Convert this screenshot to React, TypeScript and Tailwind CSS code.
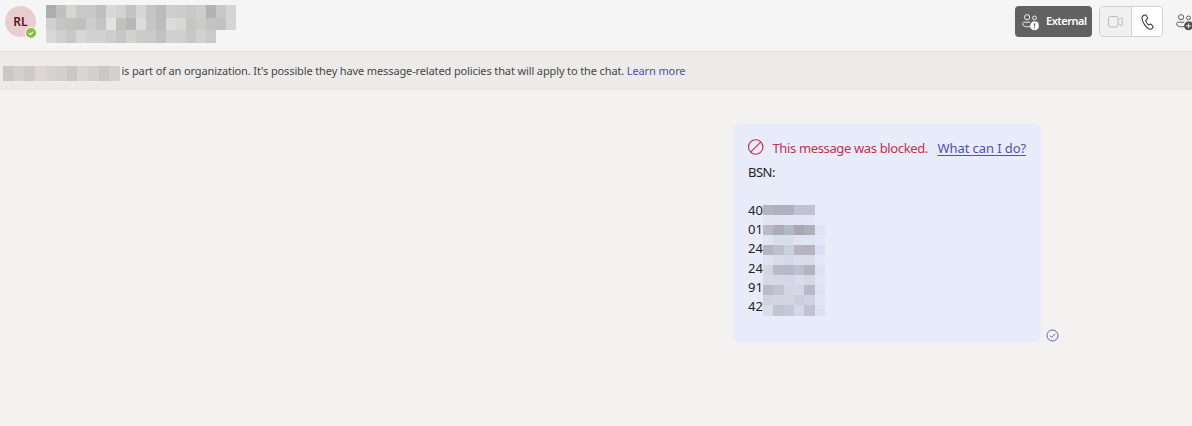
const headerMosaic: string[][] = [
  ['#adadac', '#c0c0bf', '#d6d6d4', '#c9c9c8', '#c8c8c9', '#bfbfbf', '#d8d8d6', '#d3d3d1', '#c3c3c2', '#d6d6d7', '#c4c5c4', '#bbbbbb', '#cecece', '#cbcccb', '#c9c9c6', '#cdcdcd', '#b2b3b3', '#c8c8c6', '#d5d5d6'],
  ['#d0d0d0', '#c5c5c5', '#c2c2be', '#c0c0bc', '#cecece', '#c4c4c4', '#e2e2e2', '#c1c1bf', '#b7b7b7', '#dcdcdc', '#c6c6c6', '#bcbcbc', '#dbdbdb', '#d7d7d7', '#c5c5c4', '#cacac9', '#c3c3c3', '#c2c2c2', '#d5d5d5'],
  ['#d8d8d8', '#cfcfcf', '#c9c9c9', '#d8d8d8', '#d2d2d2', '#d2d2d2', '#cecece', '#c6c6c6', '#d2d2cf', '#cbcbc7', '#cacaca', '#c1c1c1', '#d0d0d0', '#cfcfcf', '#c7c7c6', '#d1d1d1', '#cacac9'],
];

const nameMosaic: string[] = ['#cac7c5', '#d2d1cf', '#cfcac7', '#ddd7d4', '#d4d3d1', '#d2d0ce', '#c9c8c6', '#d8d5d3', '#d3cfcc', '#ccc7c4', '#d2d1d0'];

const numberMosaic: string[][] = [
  ['#b4b4be', '#adb1c0', '#adb1c0', '#c2c1d0', '#c1c1d4', '#e8ebfa'],
  ['#e2e4f3', '#dfe3f2', '#e2e5f3', '#e4e6f5', '#e4e6f5', '#e8ebfa'],
  ['#babbc8', '#acadb8', '#b3b9c7', '#a8a8b3', '#b0b0ba', '#dfe3f6'],
  ['#e1e4f3', '#d9deeb', '#d8dfec', '#dfe2f0', '#e0e3f2', '#e4e7f7'],
  ['#b5b6c3', '#bec0cb', '#cbd0df', '#b5b4c0', '#b4b3be', '#dadff3'],
  ['#dfe2ef', '#d9ddea', '#d4d9e8', '#d9dcea', '#d8dbe9', '#e3e7f7'],
  ['#d4d6e2', '#b8bac9', '#b5b9ca', '#c0c1cf', '#b4b4c1', '#dfe2f2'],
  ['#d6d8e4', '#d5d8e4', '#d3d7e7', '#d9dbe7', '#d5d7e4', '#e2e5f5'],
  ['#bbbbca', '#c3c4d0', '#d3d5e6', '#d5d7e5', '#b9bac8', '#dee3f4'],
  ['#d1d2df', '#d3d4e0', '#d3d5e2', '#cccedb', '#d1d2df', '#e0e4f5'],
  ['#d9dce9', '#c2c3d0', '#c4c8d8', '#d4d7e6', '#c2c3d0', '#dde2f3'],
];

function Cells({ rows, cell, className }: { rows: string[][]; cell: string; className?: string }) {
  return (
    <div className={className} aria-hidden="true">
      {rows.map((row, y) => (
        <div key={y} className="flex">
          {row.map((color, x) => (
            <span key={x} className={cell} style={{ backgroundColor: color }} />
          ))}
        </div>
      ))}
    </div>
  );
}

function PeopleIcon({ badge }: { badge: 'alert' | 'add' }) {
  const light = badge === 'alert';
  const ink = light ? '#f0f0f0' : '#5a5a5a';
  return (
    <svg className="h-[18px] w-[18px] shrink-0" viewBox="0 0 18 18" fill="none" stroke={ink} strokeWidth="1">
      <circle cx="5.100" cy="4.200" r="2.600" />
      <circle cx="12.500" cy="4.900" r="1.900" />
      <path d="M8.200 9.200H2.100C1.200 9.200.6 9.800.6 10.600c0 2.200 2 3.200 4.800 3.200 1 0 1.900-.1 2.600-.4" />
      <path d="M10.500 9.200h4.500c.9 0 1.500.6 1.500 1.200" />
      <circle cx="12.500" cy="12.900" r="4.400" fill={light ? '#ffffff' : '#4f4f4f'} stroke="none" />
      {light ? (
        <path d="M12.500 10.300v3.200M12.500 14.400v1.100" stroke="#5f5f5f" strokeWidth="1.200" />
      ) : (
        <path d="M12.500 10.500v4.800M10.100 12.900h4.800" stroke="#f5f5f5" strokeWidth="1" />
      )}
    </svg>
  );
}

function Header() {
  return (
    <header className="flex h-[52px] shrink-0 items-start border-b border-[#e1e1e0] bg-[#f5f5f5]">
      <div className="relative mt-[6px] ml-[5px] flex h-[31px] w-[31px] shrink-0 items-center justify-center rounded-full bg-[#e8cdd1] text-[12px] font-semibold text-[#5c1420]">
        <span>RL</span>
        <span className="absolute top-[21px] left-[20px] flex h-[12px] w-[12px] items-center justify-center rounded-full bg-[#f5f5f5]">
          <svg className="h-[10px] w-[10px]" viewBox="0 0 10 10" fill="none">
            <circle cx="5" cy="5" r="5" fill="#8cbd45" />
            <path d="M3 5.100l1.400 1.300L7 3.900" stroke="#fff" strokeWidth="1.100" />
          </svg>
        </span>
      </div>
      <Cells rows={headerMosaic} cell="h-[12.5px] w-[10px]" className="mt-[5px] ml-[10px]" />
      <div className="mt-[6px] ml-[779px] flex shrink-0 items-center">
        <button className="flex h-[31px] w-[77px] items-center rounded-[4px] bg-[#616161] pl-[7px] text-[11px] font-semibold text-white">
          <PeopleIcon badge="alert" />
          <span className="ml-[6px] tracking-[-0.5px]">External</span>
        </button>
        <div className="ml-[7px] flex h-[31px] w-[64px] overflow-hidden rounded-[4px] border border-[#d1d1d1]">
          <button className="flex w-[32px] items-center justify-center border-r border-[#d1d1d1] bg-[#f0f0f0]" aria-label="Video call">
            <svg className="h-[14px] w-[17px]" viewBox="0 0 17 14" fill="none" stroke="#bdbdbd">
              <rect x="1.500" y="1.500" width="9.500" height="10.500" rx="2" />
              <path d="M11 5.200l3.300-2.300c.4-.3 1 0 1 .5v6.700c0 .5-.6.800-1 .5L11 8.300" />
            </svg>
          </button>
          <button className="flex flex-1 items-center justify-center bg-white" aria-label="Audio call">
            <svg className="h-[16px] w-[13px]" viewBox="0 0 14 17" fill="none" stroke="#424242" strokeWidth="1.200" strokeLinejoin="round">
              <path d="M3 1.400l1-.3c.9-.3 1.800.1 2.100 1l.7 1.700c.3.700.1 1.400-.4 1.900L5.100 6.900c.3 1.600 1.500 3.500 2.800 4.500l1.700-.5c.7-.2 1.400 0 1.900.6l1.100 1.500c.5.700.4 1.600-.2 2.100l-.7.600c-.8.700-1.900.8-2.900.3C4.700 14 1.500 8.700 1.100 4.400c-.1-1.400.6-2.600 1.900-3z" />
            </svg>
          </button>
        </div>
        <button className="ml-[12.500px]" aria-label="Add people">
          <PeopleIcon badge="add" />
        </button>
      </div>
    </header>
  );
}

function PolicyBanner() {
  return (
    <div className="flex h-[38px] shrink-0 items-start border-b border-[#e6e5e4] bg-[#ecebe9] text-[11px] leading-[15px] text-[#484644]">
      <Cells rows={[nameMosaic]} cell="h-[15px] w-[10.640px]" className="mt-[14px] ml-[3px] shrink-0" />
      <p className="mt-[11px] ml-[1.500px] whitespace-nowrap tracking-[-0.125px]">
        is part of an organization. It's possible they have message-related policies that will apply to the chat.{' '}
        <a className="text-[#4f52b2]">Learn more</a>
      </p>
    </div>
  );
}

function BlockedMessage() {
  return (
    <div className="flex items-end">
      <article className="h-[218px] w-[308.500px] rounded-[6px] bg-[#e8ebfa] pl-[15.500px] text-[13px] text-[#242424]">
        <div className="flex h-[39px] items-start pt-[15px] leading-[19px] whitespace-nowrap">
          <svg className="h-[16px] w-[16px] shrink-0" viewBox="0 0 16 16" fill="none" stroke="#c4314b" strokeWidth="1.100">
            <circle cx="7.700" cy="8" r="7.200" />
            <path d="M12.800 2.900L2.600 13.100" />
          </svg>
          <span className="ml-[8.500px] w-[165px] tracking-[-0.360px] text-[#c4314b]">This message was blocked.</span>
          <a className="tracking-[-0.080px] text-[#4f52b2] underline underline-offset-2">What can I do?</a>
        </div>
        <p className="leading-[19px] tracking-[-0.500px]">BSN:</p>
        <div className="mt-[19px] flex">
          <div className="w-[15px] leading-[19.200px]">
            {['40', '01', '24', '24', '91', '42'].map((prefix, i) => (
              <p key={i}>{prefix}</p>
            ))}
          </div>
          <Cells rows={numberMosaic} cell="h-[10.050px] w-[10.330px]" className="mt-[4px]" />
        </div>
      </article>
      <svg className="mb-[0.500px] ml-[5px] h-[13px] w-[13px]" viewBox="0 0 13 13" fill="none" stroke="#5b5fc7">
        <circle cx="6.500" cy="6.500" r="5.500" />
        <path d="M4 6.700l1.700 1.600L9.200 4.900" />
      </svg>
    </div>
  );
}

export default function App() {
  return (
    <div className="flex h-[426px] w-full flex-col overflow-hidden bg-[#f3f2f1] font-['Noto_Sans','Open_Sans',sans-serif]">
      <Header />
      <PolicyBanner />
      <main className="flex flex-1 items-start pt-[34px] pl-[732.500px]">
        <BlockedMessage />
      </main>
    </div>
  );
}
